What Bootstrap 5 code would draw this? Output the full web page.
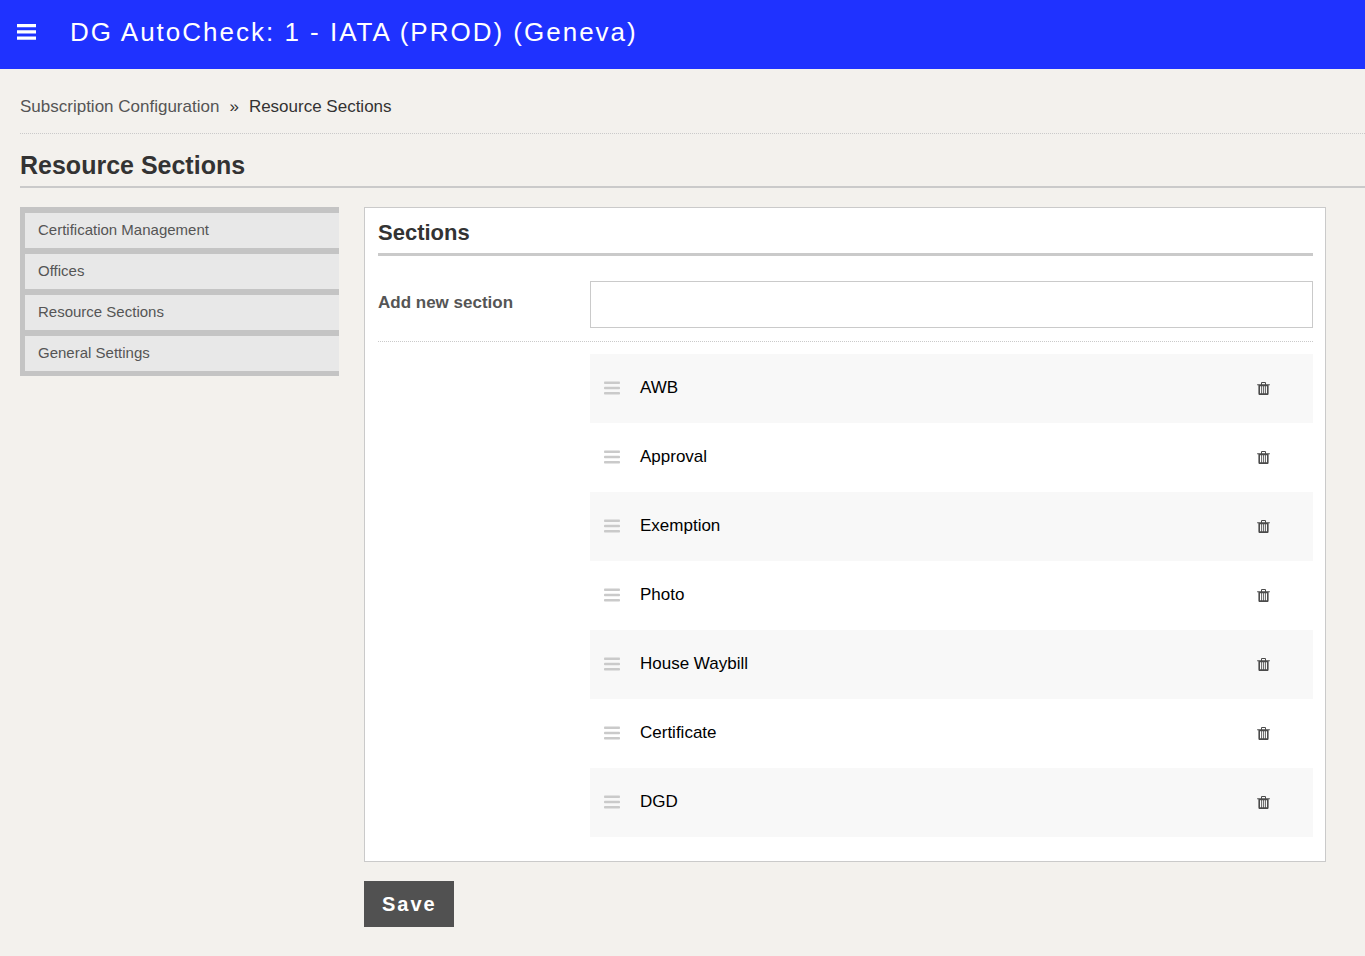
<!DOCTYPE html>
<html lang="en">
<head>
<meta charset="utf-8">
<meta name="viewport" content="width=device-width, initial-scale=1">
<title>DG AutoCheck - Resource Sections</title>
<link href="https://cdn.jsdelivr.net/npm/bootstrap@5.3.0/dist/css/bootstrap.min.css" rel="stylesheet">
<style>
  :root { --dg-line: #cacaca; --dg-text: #333; --dg-muted: #555; }
  body { background: #f3f1ed; color: var(--dg-text); font-family: "Liberation Sans", Arial, sans-serif; font-size: 17px; line-height: 24px; }
  .topbar { background: #1f32ff; min-height: 69px; padding: 0 16px 6px; gap: 33px; }
  .topbar-title { font-size: 26px; line-height: 32px; letter-spacing: 2px; }
  .icon-btn { border: 0; background: none; padding: 0; color: inherit; line-height: 0; }
  .page { padding-left: 20px; }
  .crumbs { padding: 26px 0 14px; border-bottom: 1px dotted var(--dg-line); --bs-breadcrumb-divider: "»"; --bs-breadcrumb-item-padding-x: 10px; --bs-breadcrumb-divider-color: #333; --bs-breadcrumb-item-active-color: #333; --bs-breadcrumb-font-size: 17px; }
  .crumbs a, .side-menu a { color: var(--dg-muted); text-decoration: none; }
  .page-title { font-size: 25px; line-height: 32px; padding: 15px 0 5px; border-bottom: 2px solid var(--dg-line); }
  .page-body { gap: 25px; padding: 19px 39px 29px 0; }
  .side-menu { background: #c4c4c4; padding: 6px 0 5px 5px; gap: 6px; }
  .side-menu a { background: #e8e8e8; padding: 6px 13px 7px; font-size: 15px; line-height: 22px; }
  .panel { background: #fff; border: 1px solid var(--dg-line); padding: 10px 12px 24px 13px; }
  .panel-title { font-size: 22px; line-height: 30px; padding-bottom: 5px; border-bottom: 3px solid var(--dg-line); }
  .add-row { padding: 25px 0 13px; border-bottom: 1px dotted var(--dg-line); }
  .add-row label { color: var(--dg-muted); padding-bottom: 4px; }
  .add-row .form-control { height: 47px; border-color: var(--dg-line); }
  .section-item { min-height: 69px; padding: 0 43px 1px 14px; gap: 20px; color: #000; }
  .section-item:nth-child(odd) { background: #f8f8f8; }
  .grip { color: #cacaca; cursor: move; }
  .trash { color: #4b4b4b; }
  .save-btn { background: #515151; color: #fff; font-size: 20px; line-height: 24px; letter-spacing: 2px; padding: 10px 16px 10px 17px; margin-top: 19px; }
  .save-btn:hover { background: #333; color: #fff; }
  @media (min-width: 992px) {
    .side-menu { flex: 0 0 319px; }
    .field-grid { display: grid; grid-template-columns: 212px minmax(0, 1fr); }
    .field-grid > .section-list { grid-column: 2; }
  }
</style>
</head>
<body>
<svg class="d-none" aria-hidden="true">
  <symbol id="bars" viewBox="0 0 16 14">
    <rect y=".4" width="16" height="2.600" rx=".8"/><rect y="5.700" width="16" height="2.600" rx=".8"/><rect y="11" width="16" height="2.600" rx=".8"/>
  </symbol>
  <symbol id="trash" viewBox="0 0 13 13">
    <path fill-rule="evenodd" d="M4 2.200V1.200Q4 .1 5 .1h3q1 0 1 1.100v1h3.600q.3 0 .3.300v.5q0 .3-.3.300h-1v8.300q0 1.500-1.300 1.500H2.700q-1.300 0-1.300-1.500V3.300h-1Q.1 3.300.1 3v-.5q0-.3.3-.3zM5 2.200h3V1.100H5zM3 4.200v7h1.200v-7zM5.100 4.200v7h1v-7zM6.900 4.200v7h1v-7zM8.800 4.200v7H10v-7z"/>
  </symbol>
</svg>

<header class="topbar d-flex align-items-center text-white">
  <button class="icon-btn" type="button" aria-label="Menu">
    <svg width="21" height="16" viewBox="0 0 21 16" fill="currentColor"><path d="M1 0h19v3.200H1zM1 6.300h19v3.200H1zM1 12.600h19v3.200H1z"/></svg>
  </button>
  <div class="topbar-title">DG AutoCheck: 1 - IATA (PROD) (Geneva)</div>
</header>

<main class="page">
  <nav aria-label="Breadcrumb">
    <ol class="breadcrumb crumbs mb-0">
      <li class="breadcrumb-item"><a href="#">Subscription Configuration</a></li>
      <li class="breadcrumb-item active" aria-current="page">Resource Sections</li>
    </ol>
  </nav>
  <h1 class="page-title fw-bold mb-0">Resource Sections</h1>

  <div class="page-body d-flex flex-column flex-lg-row align-items-lg-start">
    <nav class="side-menu d-flex flex-column" aria-label="Configuration">
      <a href="#">Certification Management</a>
      <a href="#">Offices</a>
      <a href="#">Resource Sections</a>
      <a href="#">General Settings</a>
    </nav>

    <form class="flex-grow-1">
      <div class="panel">
        <h2 class="panel-title fw-bold mb-0">Sections</h2>
        <div class="add-row field-grid align-items-center">
          <label class="fw-bold" for="new-section">Add new section</label>
          <input class="form-control rounded-0" type="text" id="new-section">
        </div>
        <div class="field-grid">
          <ul class="section-list list-unstyled mb-0 mt-2 pt-1">
            <li class="section-item d-flex align-items-center"><svg class="grip" width="16" height="14" fill="currentColor"><use href="#bars"/></svg><span class="flex-grow-1">AWB</span><button class="icon-btn trash" type="button" aria-label="Delete AWB"><svg width="13" height="13" fill="currentColor"><use href="#trash"/></svg></button></li>
            <li class="section-item d-flex align-items-center"><svg class="grip" width="16" height="14" fill="currentColor"><use href="#bars"/></svg><span class="flex-grow-1">Approval</span><button class="icon-btn trash" type="button" aria-label="Delete Approval"><svg width="13" height="13" fill="currentColor"><use href="#trash"/></svg></button></li>
            <li class="section-item d-flex align-items-center"><svg class="grip" width="16" height="14" fill="currentColor"><use href="#bars"/></svg><span class="flex-grow-1">Exemption</span><button class="icon-btn trash" type="button" aria-label="Delete Exemption"><svg width="13" height="13" fill="currentColor"><use href="#trash"/></svg></button></li>
            <li class="section-item d-flex align-items-center"><svg class="grip" width="16" height="14" fill="currentColor"><use href="#bars"/></svg><span class="flex-grow-1">Photo</span><button class="icon-btn trash" type="button" aria-label="Delete Photo"><svg width="13" height="13" fill="currentColor"><use href="#trash"/></svg></button></li>
            <li class="section-item d-flex align-items-center"><svg class="grip" width="16" height="14" fill="currentColor"><use href="#bars"/></svg><span class="flex-grow-1">House Waybill</span><button class="icon-btn trash" type="button" aria-label="Delete House Waybill"><svg width="13" height="13" fill="currentColor"><use href="#trash"/></svg></button></li>
            <li class="section-item d-flex align-items-center"><svg class="grip" width="16" height="14" fill="currentColor"><use href="#bars"/></svg><span class="flex-grow-1">Certificate</span><button class="icon-btn trash" type="button" aria-label="Delete Certificate"><svg width="13" height="13" fill="currentColor"><use href="#trash"/></svg></button></li>
            <li class="section-item d-flex align-items-center"><svg class="grip" width="16" height="14" fill="currentColor"><use href="#bars"/></svg><span class="flex-grow-1">DGD</span><button class="icon-btn trash" type="button" aria-label="Delete DGD"><svg width="13" height="13" fill="currentColor"><use href="#trash"/></svg></button></li>
          </ul>
        </div>
      </div>
      <button class="btn save-btn rounded-0 fw-bold" type="submit">Save</button>
    </form>
  </div>
</main>
<script src="https://cdn.jsdelivr.net/npm/bootstrap@5.3.0/dist/js/bootstrap.bundle.min.js"></script>
</body>
</html>
